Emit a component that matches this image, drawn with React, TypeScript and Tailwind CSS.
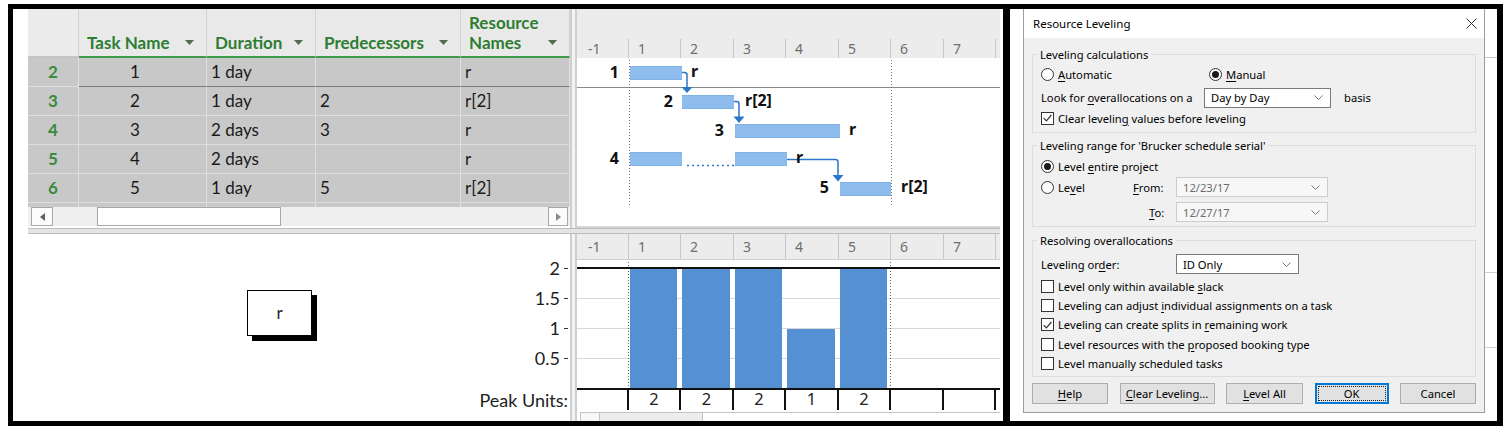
import React from 'react';

type TaskRow = { id: number; name: string; duration: string; pred: string; res: string };

const TASKS: TaskRow[] = [
  { id: 2, name: '1', duration: '1 day', pred: '', res: 'r' },
  { id: 3, name: '2', duration: '1 day', pred: '2', res: 'r[2]' },
  { id: 4, name: '3', duration: '2 days', pred: '3', res: 'r' },
  { id: 5, name: '4', duration: '2 days', pred: '', res: 'r' },
  { id: 6, name: '5', duration: '1 day', pred: '5', res: 'r[2]' },
];

const GRID = 'grid grid-cols-[51px_128px_109px_145px_109px]';

// timescale columns: label + width of the column (tick on the left edge)
const TICKS: { label: string; width: string }[] = [
  { label: '-1', width: 'w-[51px] pl-[11px]' },
  { label: '1', width: 'w-[52px] border-l pl-[9px]' },
  { label: '2', width: 'w-[53px] border-l pl-[9px]' },
  { label: '3', width: 'w-[52px] border-l pl-[9px]' },
  { label: '4', width: 'w-[53px] border-l pl-[9px]' },
  { label: '5', width: 'w-[52px] border-l pl-[9px]' },
  { label: '6', width: 'w-[53px] border-l pl-[9px]' },
  { label: '7', width: 'w-[52px] border-l pl-[9px]' },
];

const DAY_X = [628, 680, 733, 785, 838, 890, 943, 995];
const UNITS = [2, 2, 2, 1, 2];
const LINK = '#2c77c9';

const BARS = [
  { x: 630, y: 66, w: 52 },
  { x: 682, y: 95, w: 52 },
  { x: 735, y: 124, w: 105 },
  { x: 630, y: 152, w: 52 },
  { x: 735, y: 152, w: 52 },
  { x: 840, y: 182, w: 51 },
];

const GANTT_LABELS = [
  { x: 619, y: 78, t: '1', end: true },
  { x: 691, y: 77, t: 'r' },
  { x: 673, y: 107, t: '2', end: true },
  { x: 745, y: 106, t: 'r[2]' },
  { x: 724, y: 136, t: '3', end: true },
  { x: 849, y: 135, t: 'r' },
  { x: 619, y: 164, t: '4', end: true },
  { x: 796, y: 163, t: 'r' },
  { x: 829, y: 193, t: '5', end: true },
  { x: 901, y: 192, t: 'r[2]' },
];

const SortArrow: React.FC = () => (
  <svg width="9" height="5" viewBox="0 0 9 5" className="mb-[8px] shrink-0" aria-hidden="true">
    <path d="M0 0H9L4.5 5Z" fill="#4f6b4f" />
  </svg>
);

const HeaderCell: React.FC<{ lines: string[] }> = ({ lines }) => (
  <div className="flex items-end justify-between border-r border-b-2 border-r-[#d2d2d2] border-b-[#3e9a48] bg-[#e9e9e9] pb-[3px] pl-[8px] pr-[12px]">
    <div className="text-[17px] font-bold leading-[20px] text-[#2e7d32]">
      {lines.map(l => (
        <div key={l}>{l}</div>
      ))}
    </div>
    <SortArrow />
  </div>
);

const Timescale: React.FC<{ className: string }> = ({ className }) => (
  <div className={`flex font-['Noto_Sans',sans-serif] text-[14px] text-[#6e6e6e] ${className}`}>
    {TICKS.map(t => (
      <div key={t.label} className={`flex items-center border-[#c6c6c6] ${t.width}`}>
        {t.label}
      </div>
    ))}
    <div className="flex-1 border-l border-[#c6c6c6]" />
  </div>
);

const Splitter: React.FC = () => <div className="w-[7px] border-x-2 border-[#cfcfcf] bg-[#f3f3f3]" />;

const TaskTable: React.FC = () => (
  <div className="flex w-[542px] flex-col">
    <div className={`${GRID} h-[49px]`}>
      <div className="border-r border-b-2 border-r-[#d2d2d2] border-b-[#c4c4c4] bg-[#ececec]" />
      <HeaderCell lines={['Task Name']} />
      <HeaderCell lines={['Duration']} />
      <HeaderCell lines={['Predecessors']} />
      <HeaderCell lines={['Resource', 'Names']} />
    </div>
    {TASKS.map((t, i) => {
      const line = i === 0 ? 'border-r border-b border-[#dedede] border-b-[#7a7a7a]' : 'border-r border-b border-[#dedede]';
      return (
        <div key={t.id} className={`${GRID} h-[29px] bg-[#c8c8c8] text-[17px] text-[#1a1a1a]`}>
          <div className="flex items-center justify-center border-r border-b border-[#dedede] font-bold text-[#3a8a3e]">{t.id}</div>
          <div className={`flex items-center pl-[51px] ${line}`}>{t.name}</div>
          <div className={`flex items-center pl-[4px] ${line}`}>{t.duration}</div>
          <div className={`flex items-center pl-[4px] ${line}`}>{t.pred}</div>
          <div className={`flex items-center pl-[4px] ${line}`}>{t.res}</div>
        </div>
      );
    })}
    <div className={`${GRID} h-[4px] bg-[#c8c8c8]`}>
      <div className="border-r border-[#dedede]" />
      <div className="border-r border-[#dedede]" />
      <div className="border-r border-[#dedede]" />
      <div className="border-r border-[#dedede]" />
      <div className="border-r border-[#dedede]" />
    </div>
    <div className="flex h-[19px] bg-[#efefef] pl-[3px] pr-[2px]">
      <div className="flex w-[22px] items-center justify-center border border-[#a8a8a8] bg-[#fbfbfb]">
        <svg width="5" height="8" viewBox="0 0 5 8" aria-hidden="true">
          <path d="M5 0V8L0 4Z" fill="#606060" />
        </svg>
      </div>
      <div className="flex-1 pl-[44px]">
        <div className="h-full w-[184px] border border-[#a8a8a8] bg-white" />
      </div>
      <div className="flex w-[20px] items-center justify-center border border-[#a8a8a8] bg-[#fbfbfb]">
        <svg width="5" height="8" viewBox="0 0 5 8" aria-hidden="true">
          <path d="M0 0V8L5 4Z" fill="#8a8a8a" />
        </svg>
      </div>
    </div>
    <div className="h-[2px] bg-white" />
  </div>
);

const GanttPane: React.FC = () => (
  <div className="flex w-[423px] flex-col">
    <div className="flex h-[49px] flex-col bg-[#ececec]">
      <div className="flex-1" />
      <Timescale className="h-[19px]" />
    </div>
    <svg width="423" height="168" className="font-['Noto_Sans',sans-serif]" aria-hidden="true">
      <g transform="translate(-577,-58)">
        <line x1="577" y1="87.5" x2="1000" y2="87.5" stroke="#8a8a8a" />
        <line x1="629.5" y1="60" x2="629.5" y2="207" stroke="#777" strokeDasharray="1 2" />
        <line x1="891.5" y1="60" x2="891.5" y2="207" stroke="#777" strokeDasharray="1 2" />
        {BARS.map(b => (
          <g key={`${b.x}-${b.y}`}>
            <rect x={b.x} y={b.y} width={b.w} height="14" fill="#8ebcec" />
            <line x1={b.x} y1={b.y + 0.5} x2={b.x + b.w} y2={b.y + 0.5} stroke="#6ea6df" strokeDasharray="1 1" />
            <line x1={b.x} y1={b.y + 13.5} x2={b.x + b.w} y2={b.y + 13.5} stroke="#6ea6df" strokeDasharray="1 1" />
          </g>
        ))}
        <line x1="687" y1="165.5" x2="734" y2="165.5" stroke={LINK} strokeWidth="1.5" strokeDasharray="2 3" />
        <path d="M682 72.5H684.5Q687 72.5 687 75V88" stroke={LINK} strokeWidth="1.5" fill="none" />
        <path d="M681.5 87H692.5L687 93Z" fill={LINK} />
        <path d="M734 101.5H736.5Q739 101.5 739 104V117" stroke={LINK} strokeWidth="1.5" fill="none" />
        <path d="M733.5 116.5H744.5L739 123Z" fill={LINK} />
        <path d="M787 159.5H835.5Q838 159.5 838 162V175" stroke={LINK} strokeWidth="1.5" fill="none" />
        <path d="M832.5 175H843.5L838 181.5Z" fill={LINK} />
        {GANTT_LABELS.map(l => (
          <text key={`${l.x}-${l.y}`} x={l.x} y={l.y} fontSize="16" fontWeight="700" fill="#111" textAnchor={l.end ? 'end' : 'start'}>
            {l.t}
          </text>
        ))}
      </g>
    </svg>
    <div className="h-[2px] bg-[#d6d6d6]" />
  </div>
);

const ResourcePane: React.FC = () => (
  <div className="flex w-[542px]">
    <div className="flex-1 pl-[219px] pt-[56px]">
      <div className="flex h-[46px] w-[65px] items-center justify-center border border-black bg-white text-[17px] text-[#1f1f1f] shadow-[5px_5px_0_0_#000]">
        r
      </div>
    </div>
    <div className="flex flex-col items-end pr-[2px] pt-[19px] text-[18px] text-[#1e1e1e]">
      {['2', '1.5', '1', '0.5'].map(v => (
        <div key={v} className="flex h-[30px] items-center gap-[4px]">
          {v}
          <span className="h-[1px] w-[4px] bg-[#333]" />
        </div>
      ))}
      <div className="mt-[16px] flex h-[22px] items-center">Peak Units:</div>
    </div>
  </div>
);

const HistogramPane: React.FC = () => (
  <div className="flex w-[423px] flex-col">
    <Timescale className="h-[26px] border-b border-b-[#cfcfcf] bg-[#ececec]" />
    <svg width="423" height="150" className="font-['Noto_Sans',sans-serif]" aria-hidden="true">
      <g transform="translate(-577,-260)">
        {[298.5, 328.5, 358.5].map(y => (
          <line key={y} x1="577" y1={y} x2="1000" y2={y} stroke="#d8d8d8" />
        ))}
        {UNITS.map((u, i) => {
          const top = u === 2 ? 269 : 329;
          return <rect key={i} x={DAY_X[i] + 2} y={top} width={DAY_X[i + 1] - DAY_X[i] - 5} height={388 - top} fill="#5590d3" />;
        })}
        <line x1="628.5" y1="262" x2="628.5" y2="388" stroke="#666" strokeDasharray="1 2" />
        <line x1="890.5" y1="262" x2="890.5" y2="388" stroke="#666" strokeDasharray="1 2" />
        <rect x="577" y="267" width="423" height="2" fill="#111" />
        <rect x="577" y="388" width="423" height="2" fill="#111" />
        {DAY_X.map(x => (
          <rect key={x} x={x - 1} y="390" width="2" height="20" fill="#111" />
        ))}
        {UNITS.map((u, i) => (
          <text key={i} x={(DAY_X[i] + DAY_X[i + 1]) / 2} y="405" fontSize="16.5" fill="#222" textAnchor="middle">
            {u}
          </text>
        ))}
      </g>
    </svg>
    <div className="flex h-[11px] pt-[2px] pl-[3px]">
      <div className="w-[20px] border border-b-0 border-[#c4c4c4] bg-[#f7f7f7]" />
      <div className="w-[103px] border-t border-r border-[#c4c4c4] bg-[#ededed]" />
      <div className="flex-1 border-t border-[#c4c4c4]" />
    </div>
  </div>
);

const ProjectPanel: React.FC = () => (
  <div className="flex h-[412px] w-[990px] bg-white pl-[15px] pr-[3px] font-['Lato',sans-serif]">
    <div className="flex w-[972px] flex-col">
      <div className="flex h-[219px]">
        <TaskTable />
        <Splitter />
        <GanttPane />
      </div>
      <div className="h-[6px] border-y border-[#bdbdbd] bg-[#e4e4e4]" />
      <div className="flex h-[187px]">
        <ResourcePane />
        <Splitter />
        <HistogramPane />
      </div>
    </div>
  </div>
);

// ---------- dialog ----------

const Radio: React.FC<{ checked?: boolean }> = ({ checked }) => (
  <span className="flex h-[13px] w-[13px] shrink-0 items-center justify-center rounded-full border border-[#333] bg-white">
    {checked && <span className="h-[7px] w-[7px] rounded-full bg-[#1a1a1a]" />}
  </span>
);

const Check: React.FC<{ checked?: boolean }> = ({ checked }) => (
  <span className="flex h-[13px] w-[13px] shrink-0 items-center justify-center border border-[#333] bg-white">
    {checked && (
      <svg width="9" height="8" viewBox="0 0 9 8" aria-hidden="true">
        <path d="M0.7 4.2L3.4 6.9L8.4 1" fill="none" stroke="#333" strokeWidth="1.2" />
      </svg>
    )}
  </span>
);

const U: React.FC<{ children: React.ReactNode }> = ({ children }) => <span className="underline underline-offset-2">{children}</span>;

const Chevron: React.FC = () => (
  <svg width="9" height="5" viewBox="0 0 9 5" aria-hidden="true">
    <path d="M0.5 0.5L4.5 4.5L8.5 0.5" fill="none" stroke="#7a7a7a" />
  </svg>
);

const Select: React.FC<{ value: string; className: string; disabled?: boolean }> = ({ value, className, disabled }) => (
  <div
    className={`flex h-[20px] items-center justify-between border pl-[6px] pr-[7px] ${
      disabled ? 'border-[#cccccc] bg-[#f7f7f7] text-[#6d6d6d]' : 'border-[#7a7a7a] bg-white text-black'
    } ${className}`}
  >
    <span>{value}</span>
    <Chevron />
  </div>
);

const CheckRow: React.FC<{ checked?: boolean; children: React.ReactNode }> = ({ checked, children }) => (
  <div className="flex h-[19.4px] items-center gap-[4px]">
    <Check checked={checked} />
    <span>{children}</span>
  </div>
);

const Button: React.FC<{ width: string; primary?: boolean; children: React.ReactNode }> = ({ width, primary, children }) =>
  primary ? (
    <div className={`flex h-[21px] items-center justify-center border-2 border-[#0078d7] bg-[#e1e1e1] p-[1px] ${width}`}>
      <div className="flex h-full w-full items-center justify-center outline-1 outline-dotted outline-[#222] -outline-offset-1">{children}</div>
    </div>
  ) : (
    <div className={`flex h-[21px] items-center justify-center border border-[#adadad] bg-[#e1e1e1] ${width}`}>{children}</div>
  );

const LevelingDialog: React.FC = () => (
  <div className="flex h-[412px] w-[487px] bg-white font-['Noto_Sans',sans-serif] text-[11.2px] leading-[15px] text-black">
    <div className="w-[13px]" />
    <div className="flex h-[404px] w-[462px] flex-col border-x border-b border-[#9c9c9c]">
      <div className="flex h-[29px] items-center justify-between bg-white pl-[9px] pr-[7px] text-[11.5px]">
        <span>Resource Leveling</span>
        <svg width="11" height="11" viewBox="0 0 11 11" aria-hidden="true">
          <path d="M0.5 0.5L10.5 10.5M10.5 0.5L0.5 10.5" stroke="#333" strokeWidth="1" />
        </svg>
      </div>
      <div className="flex flex-1 flex-col bg-[#f0f0f0] px-[8px]">
        <fieldset className="mt-[9px] h-[86px] border border-[#dcdcdc] pl-[4px] pr-[8px]">
          <legend className="px-[3px]">Leveling calculations</legend>
          <div className="pl-[4px]">
            <div className="mt-[2px] flex h-[20px] items-center">
              <div className="flex w-[168px] items-center gap-[4px]">
                <Radio />
                <span>
                  <U>A</U>utomatic
                </span>
              </div>
              <div className="flex items-center gap-[4px]">
                <Radio checked />
                <span>
                  <U>M</U>anual
                </span>
              </div>
            </div>
            <div className="mt-[3px] flex h-[21px] items-center">
              <span className="w-[163px]">
                Look for <U>o</U>verallocations on a
              </span>
              <Select value="Day by Day" className="w-[127px]" />
              <span className="ml-[13px]">basis</span>
            </div>
            <div className="mt-[1px] flex h-[18px] items-center gap-[4px]">
              <Check checked />
              <span>
                Clear levelin<U>g</U> values before leveling
              </span>
            </div>
          </div>
        </fieldset>

        <fieldset className="mt-[5px] h-[89px] border border-[#dcdcdc] pl-[4px] pr-[8px]">
          <legend className="px-[3px]">Leveling range for 'Brucker schedule serial'</legend>
          <div className="pl-[4px]">
            <div className="mt-[3px] flex h-[20px] items-center gap-[4px]">
              <Radio checked />
              <span>
                Level <U>e</U>ntire project
              </span>
            </div>
            <div className="mt-[1px] flex h-[20px] items-center">
              <div className="flex w-[92px] items-center gap-[4px]">
                <Radio />
                <span>
                  Le<U>v</U>el
                </span>
              </div>
              <span className="w-[43px]">
                <U>F</U>rom:
              </span>
              <Select value="12/23/17" className="w-[152px]" disabled />
            </div>
            <div className="mt-[5px] flex h-[20px] items-center">
              <span className="w-[135px] pl-[108px]">
                <U>T</U>o:
              </span>
              <Select value="12/27/17" className="w-[152px]" disabled />
            </div>
          </div>
        </fieldset>

        <fieldset className="mt-[6px] h-[144px] border border-[#dcdcdc] pl-[4px] pr-[8px]">
          <legend className="px-[3px]">Resolving overallocations</legend>
          <div className="pl-[4px]">
            <div className="mt-[6px] flex h-[20px] items-center">
              <span className="w-[135px]">
                Leveling or<U>d</U>er:
              </span>
              <Select value="ID Only" className="w-[123px]" />
            </div>
            <div className="mt-[2.5px]">
              <CheckRow>
                Level only within available <U>s</U>lack
              </CheckRow>
              <CheckRow>
                Leveling can adjust <U>i</U>ndividual assignments on a task
              </CheckRow>
              <CheckRow checked>
                Leveling can create splits in <U>r</U>emaining work
              </CheckRow>
              <CheckRow>
                Level resources with the <U>p</U>roposed booking type
              </CheckRow>
              <CheckRow>Level manually scheduled tasks</CheckRow>
            </div>
          </div>
        </fieldset>

        <div className="mt-[6px] flex justify-between">
          <Button width="w-[76px]">
            <U>H</U>elp
          </Button>
          <Button width="w-[95px]">
            <U>C</U>lear Leveling...
          </Button>
          <Button width="w-[77px]">
            <U>L</U>evel All
          </Button>
          <Button width="w-[74px]" primary>
            OK
          </Button>
          <Button width="w-[76px]">Cancel</Button>
        </div>
      </div>
    </div>
    <div className="flex flex-1 flex-col">
      <div className="h-[48px]" />
      <div className="h-[1px] bg-[#c8c8c8]" />
      <div className="h-[214px]" />
      <div className="h-[1px] bg-[#d0d0d0]" />
      <div className="h-[74px]" />
      <div className="h-[1px] bg-[#d0d0d0]" />
    </div>
  </div>
);

export default function App() {
  return (
    <div className="h-[430px] w-[1508px] bg-white pl-[8px] pt-[4px]">
      <div className="flex h-[422px] w-[1495px] gap-[7px] bg-black pb-[5px] pl-[5px] pr-[6px] pt-[5px]">
        <ProjectPanel />
        <LevelingDialog />
      </div>
    </div>
  );
}
